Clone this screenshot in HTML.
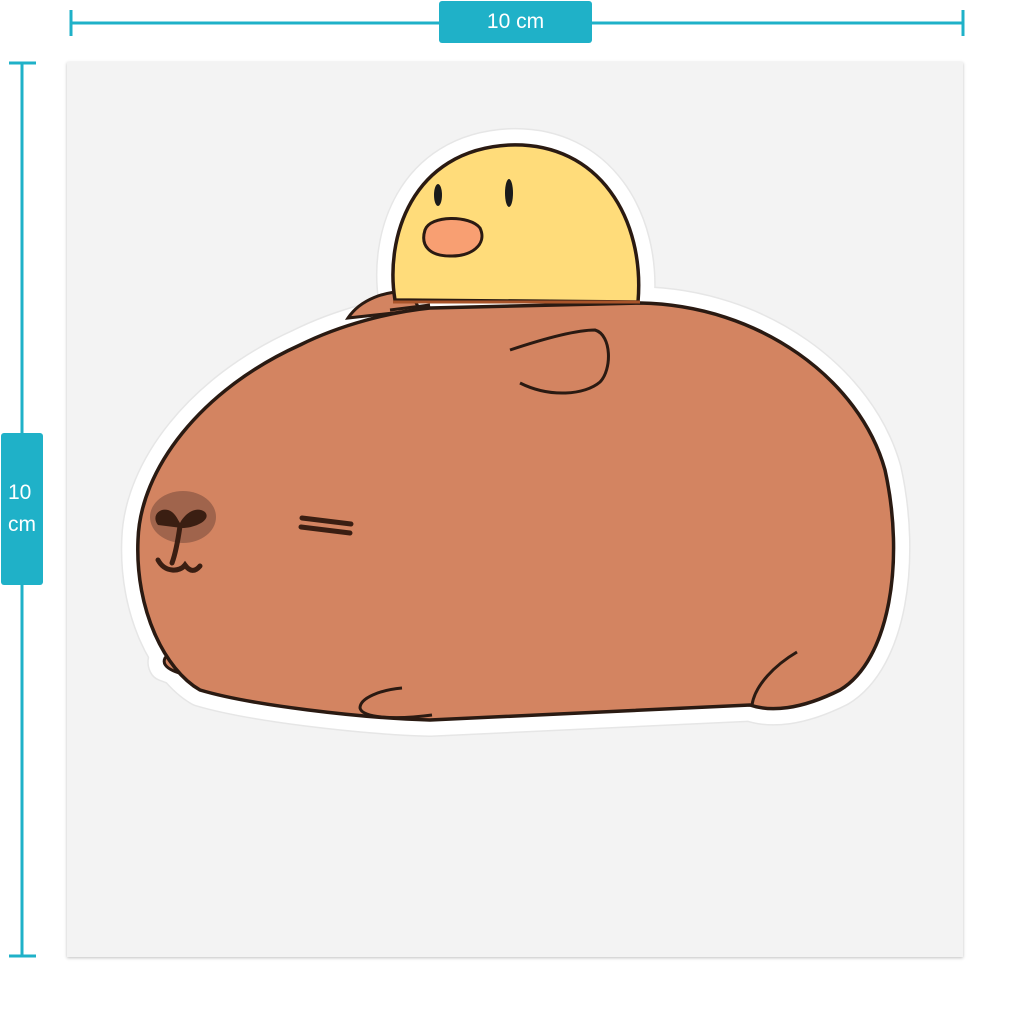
<!DOCTYPE html>
<html><head><style>
html,body{margin:0;padding:0;background:#fff;width:1024px;height:1024px;overflow:hidden;font-family:"Liberation Sans",sans-serif}
.lbl{position:absolute;background:#1fb1c8;color:#fff;border-radius:3px;display:flex;align-items:center;justify-content:center;font-size:21px}
</style></head><body>
<div style="position:absolute;left:67px;top:62px;width:896px;height:895px;background:#f3f3f3;box-shadow:0 1px 3px rgba(0,0,0,.25)"></div>
<svg width="1024" height="1024" style="position:absolute;left:0;top:0">
<g stroke="#1fb1c8" stroke-width="3">
<line x1="70" y1="23" x2="964" y2="23"/><line x1="71" y1="10" x2="71" y2="36"/><line x1="963" y1="10" x2="963" y2="36"/>
<line x1="22" y1="63" x2="22" y2="956"/><line x1="9" y1="63" x2="36" y2="63"/><line x1="9" y1="956" x2="36" y2="956"/>
</g>
<g fill="#e6e6e6" stroke="#e6e6e6" stroke-width="34" stroke-linejoin="round">
<path d="M200 690 C165 670 135 610 138 540 C140 470 200 390 300 345 C340 325 390 312 430 308 L640 303 C760 305 860 380 885 470 C905 560 890 660 840 690 C800 710 770 712 750 705 L430 720 C360 718 250 705 200 690 Z"/>
<path d="M395 300 C385 240 410 150 510 145 C600 142 645 220 638 302 Z"/>
<path d="M165 665 C160 655 180 650 200 660 L200 678 Z"/>
</g>
<g fill="#fff" stroke="#fff" stroke-width="31" stroke-linejoin="round">
<path d="M200 690 C165 670 135 610 138 540 C140 470 200 390 300 345 C340 325 390 312 430 308 L640 303 C760 305 860 380 885 470 C905 560 890 660 840 690 C800 710 770 712 750 705 L430 720 C360 718 250 705 200 690 Z"/>
<path d="M395 300 C385 240 410 150 510 145 C600 142 645 220 638 302 Z"/>
<path d="M165 665 C160 655 180 650 200 660 L200 678 Z"/>
</g>
<path d="M348 318 C360 300 385 290 410 292 L420 310 Z" fill="#d38461" stroke="#2a1a12" stroke-width="3"/>
<path d="M205 678 C178 675 160 668 165 658 C170 650 185 658 200 662 Z" fill="#d38461" stroke="#2a1a12" stroke-width="3"/>
<path d="M200 690 C165 670 135 610 138 540 C140 470 200 390 300 345 C340 325 390 312 430 308 L640 303 C760 305 860 380 885 470 C905 560 890 660 840 690 C800 710 770 712 750 705 L430 720 C360 718 250 705 200 690 Z" fill="#d38461" stroke="#2a1a12" stroke-width="3.5"/>
<path d="M395 300 C385 240 410 150 510 145 C600 142 645 220 638 302 Z" fill="#ffdc7a" stroke="#2a1a12" stroke-width="3.5"/>
<path d="M393 302 L640 302" stroke="#a8542a" stroke-width="3"/>
<ellipse cx="438" cy="195" rx="4" ry="11" fill="#1a1a1a"/>
<ellipse cx="509" cy="193" rx="4" ry="14" fill="#1a1a1a"/>
<path d="M425 230 C430 215 470 215 480 228 C488 245 470 257 450 256 C430 256 420 246 425 230 Z" fill="#f89f72" stroke="#2a1a12" stroke-width="3"/>
<path d="M510 350 C540 340 575 330 595 330 C612 335 612 370 600 382 C585 395 550 398 520 383" fill="none" stroke="#2a1a12" stroke-width="3"/>
<path d="M390 310 L430 305" stroke="#2a1a12" stroke-width="3"/>
<path d="M402 688 C380 690 360 698 360 708 C362 718 395 720 432 715" fill="none" stroke="#2a1a12" stroke-width="3"/>
<path d="M797 652 C775 665 755 685 752 705" fill="none" stroke="#2a1a12" stroke-width="3"/>
<ellipse cx="183" cy="517" rx="33" ry="26" fill="#a0644c"/>
<path d="M158 525 C150 515 162 505 172 512 C176 515 178 520 180 523 C184 515 195 505 205 512 C212 520 195 528 182 528 Z" fill="#3a1e12"/>
<path d="M180 526 C178 540 175 555 172 563 M158 560 C165 573 180 572 185 565 C190 572 195 572 200 566" fill="none" stroke="#3a1e12" stroke-width="5" stroke-linecap="round"/>
<path d="M302 518 L351 524 M301 527 L350 533" stroke="#3a1e12" stroke-width="5" stroke-linecap="round"/>
</svg>
<div class="lbl" style="left:439px;top:1px;width:153px;height:42px">10 cm</div>
<div class="lbl" style="left:1px;top:433px;width:42px;height:152px;flex-direction:column;line-height:32px">10<br>cm</div>
</body></html>
